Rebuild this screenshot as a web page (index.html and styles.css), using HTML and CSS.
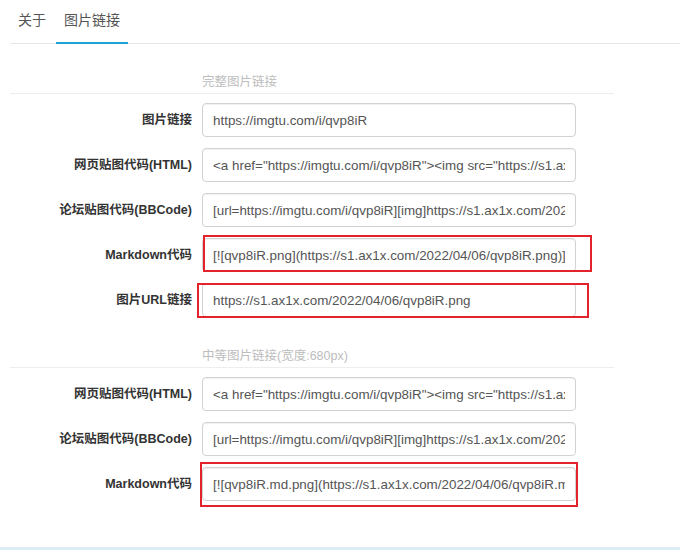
FILE: index.html
```html
<!DOCTYPE html>
<html lang="zh-CN">
<head>
<meta charset="utf-8">
<title>图片链接</title>
<link rel="stylesheet" href="styles.css">
</head>
<body>
<nav class="tabs">
  <a class="tab">关于</a>
  <a class="tab active">图片链接</a>
</nav>

<section class="group">
  <div class="group-title">完整图片链接</div>
  <div class="rows">
    <div class="row">
      <label class="label">图片链接</label>
      <div class="field"><input class="input" readonly value="https://imgtu.com/i/qvp8iR"></div>
    </div>
    <div class="row">
      <label class="label">网页贴图代码(HTML)</label>
      <div class="field"><input class="input" readonly value="&lt;a href=&quot;https://imgtu.com/i/qvp8iR&quot;&gt;&lt;img src=&quot;https://s1.ax1x.com/2022/04/06/qvp8iR.png&quot; alt=&quot;qvp8iR.png&quot; border=&quot;0&quot; /&gt;&lt;/a&gt;"></div>
    </div>
    <div class="row">
      <label class="label">论坛贴图代码(BBCode)</label>
      <div class="field"><input class="input" readonly value="[url=https://imgtu.com/i/qvp8iR][img]https://s1.ax1x.com/2022/04/06/qvp8iR.png[/img][/url]"></div>
    </div>
    <div class="row">
      <label class="label">Markdown代码</label>
      <div class="field"><input class="input" readonly value="[![qvp8iR.png](https://s1.ax1x.com/2022/04/06/qvp8iR.png)](https://imgtu.com/i/qvp8iR)"><span class="mark mark-md1"></span></div>
    </div>
    <div class="row">
      <label class="label">图片URL链接</label>
      <div class="field"><input class="input" readonly value="https://s1.ax1x.com/2022/04/06/qvp8iR.png"><span class="mark mark-url"></span></div>
    </div>
  </div>
</section>

<section class="group group-medium">
  <div class="group-title">中等图片链接(宽度:680px)</div>
  <div class="rows">
    <div class="row">
      <label class="label">网页贴图代码(HTML)</label>
      <div class="field"><input class="input" readonly value="&lt;a href=&quot;https://imgtu.com/i/qvp8iR&quot;&gt;&lt;img src=&quot;https://s1.ax1x.com/2022/04/06/qvp8iR.md.png&quot; alt=&quot;qvp8iR.png&quot; border=&quot;0&quot; /&gt;&lt;/a&gt;"></div>
    </div>
    <div class="row">
      <label class="label">论坛贴图代码(BBCode)</label>
      <div class="field"><input class="input" readonly value="[url=https://imgtu.com/i/qvp8iR][img]https://s1.ax1x.com/2022/04/06/qvp8iR.md.png[/img][/url]"></div>
    </div>
    <div class="row">
      <label class="label">Markdown代码</label>
      <div class="field"><input class="input" readonly value="[![qvp8iR.md.png](https://s1.ax1x.com/2022/04/06/qvp8iR.md.png)](https://imgtu.com/i/qvp8iR)"><span class="mark mark-md2"></span></div>
    </div>
  </div>
</section>

<div class="footer-line"></div>
</body>
</html>
```

FILE: styles.css
```css
* { box-sizing: border-box; }

html, body {
  margin: 0;
  padding: 0;
  background: #fff;
}

body {
  font-family: "Liberation Sans", Arial, "Noto Sans CJK SC", sans-serif;
  color: #333;
  width: 680px;
  height: 551px;
  overflow: hidden;
}

.tabs {
  display: flex;
  margin-left: 10px;
  border-bottom: 1px solid #e6e6e6;
  height: 44px;
}

.tab {
  display: block;
  padding: 10px 8px 12px;
  margin-right: 2px;
  font-size: 14px;
  line-height: 20px;
  color: #555;
  border-bottom: 2px solid transparent;
  margin-bottom: -1px;
  height: 44px;
}

.tab.active {
  border-bottom-color: #1aa5d6;
}

.group {
  margin-left: 10px;
  width: 604px;
  margin-top: 29px;
}

.group-medium {
  margin-top: 30px;
}

.group-title {
  padding-left: 192px;
  font-size: 12.5px;
  line-height: 18px;
  color: #bdbdbd;
  padding-bottom: 2px;
  border-bottom: 1px solid #eeeeee;
}

.rows {
  display: flex;
  flex-direction: column;
  gap: 11px;
  padding-top: 9px;
}

.row {
  display: grid;
  grid-template-columns: 182px 374px;
  column-gap: 10px;
  align-items: center;
}

.label {
  text-align: right;
  font-size: 12.5px;
  font-weight: bold;
  color: #333;
  line-height: 18px;
}

.field {
  position: relative;
}

.input {
  display: block;
  width: 374px;
  height: 34px;
  padding: 6px 10px;
  border: 1px solid #d2d2d2;
  border-radius: 4px;
  background: #fff;
  box-shadow: inset 0 1px 1px rgba(0, 0, 0, 0.06);
  font-family: "Liberation Sans", Arial, sans-serif;
  font-size: 13.4px;
  color: #555;
  outline: none;
}

.mark {
  position: absolute;
  border: 2px solid #e3232c;
  pointer-events: none;
}

.mark-md1 {
  left: 1px;
  top: -3px;
  width: 389px;
  height: 37px;
}

.mark-url {
  left: -5px;
  top: 0;
  width: 392px;
  height: 35px;
}

.mark-md2 {
  left: -2px;
  top: -5px;
  width: 378px;
  height: 45px;
}

.footer-line {
  margin-top: 46px;
  height: 3px;
  background: #dcedf6;
}
```
